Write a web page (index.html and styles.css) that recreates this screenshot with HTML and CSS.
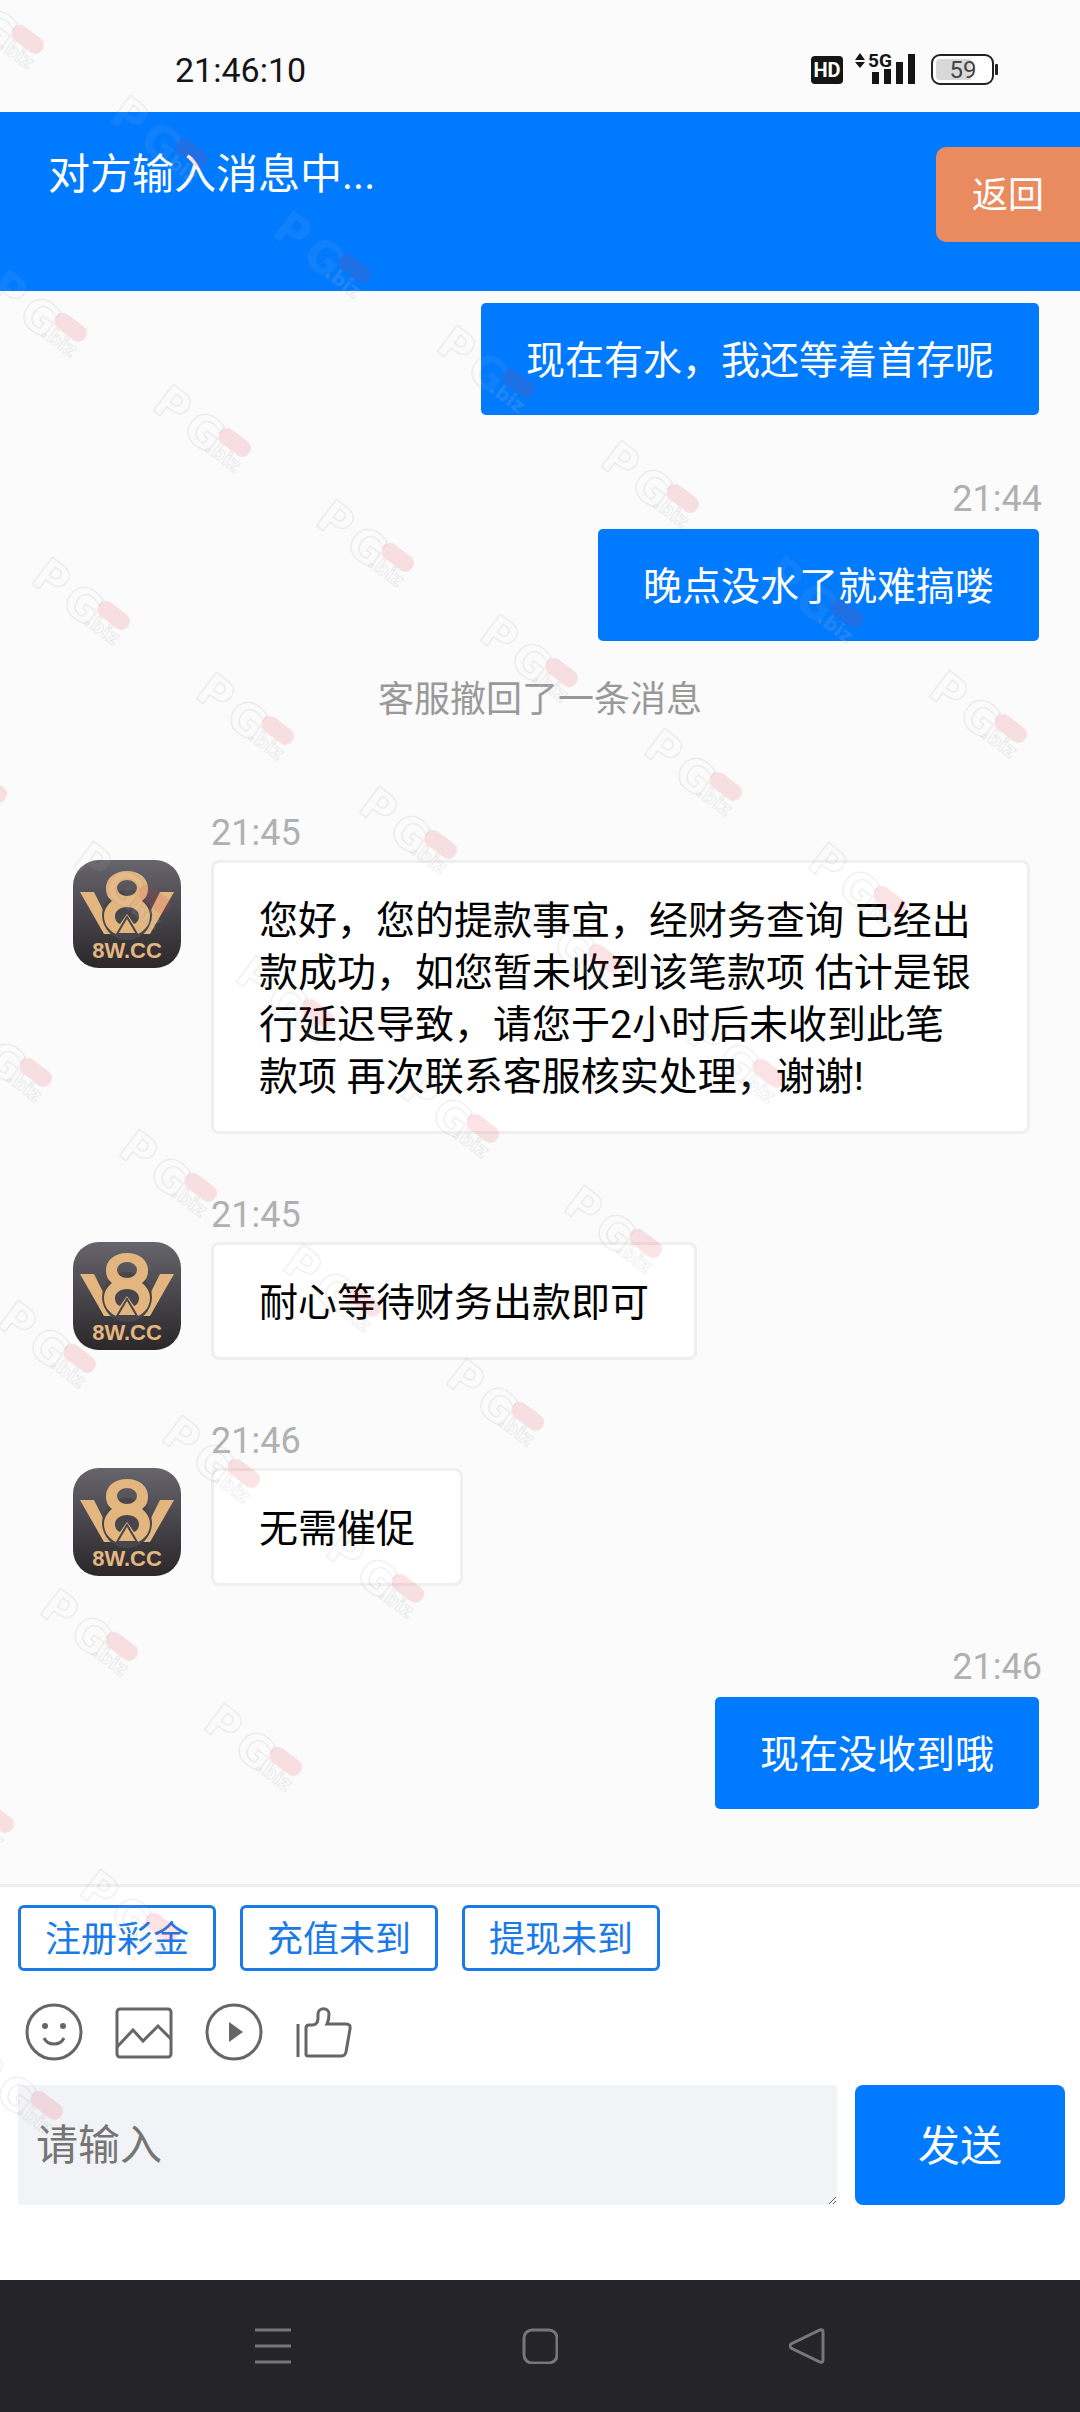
FILE: index.html
```html
<!DOCTYPE html>
<html lang="zh-CN">
<head>
<meta charset="utf-8">
<meta name="viewport" content="width=device-width, initial-scale=1">
<title>在线客服</title>
<link rel="stylesheet" href="styles.css">
</head>
<body>
<svg class="defs" width="0" height="0" aria-hidden="true">
  <defs>
    <linearGradient id="badge" x1="0" y1="0" x2="0" y2="1">
      <stop offset="0" stop-color="#67656c"/>
      <stop offset="0.5" stop-color="#48464b"/>
      <stop offset="1" stop-color="#2b272a"/>
    </linearGradient>
    <symbol id="logo" viewBox="0 0 108 108">
      <rect width="108" height="108" rx="26" fill="url(#badge)"/>
      <path d="M7 32h14l21 42H31zM101 32H87L66 74h11z" fill="#e3b680"/>
      <circle cx="54" cy="55" r="25" fill="#48464b"/>
      <path fill="#e3b680" fill-rule="evenodd" d="M54 11c12 0 21 7 21 17 0 6-2 10-6 13 5 4 8 9 8 15 0 8-5 15-12 18H43c-7-3-12-10-12-18 0-6 3-11 8-15-4-3-6-7-6-13 0-10 9-17 21-17zM54 20a10 8 0 1 0 0 16a10 8 0 1 0 0-16zM54 47c-7 0-12 4-12 9 0 4 2 7 5 8l7-10 7 10c3-1 5-4 5-8 0-5-5-9-12-9z"/>
      <path d="M54 57l10 17H44z" fill="#e3b680" stroke="#48464b" stroke-width="2"/>
      <text x="54" y="98" text-anchor="middle" class="logo-text">8W.CC</text>
    </symbol>
    <g id="wm" transform="rotate(37)">
      <text x="-88" y="24" class="wm-big">P</text>
      <text x="-49" y="26" class="wm-big">G</text>
      <rect x="-18" y="-8" width="36" height="17" rx="8" class="wm-pill"/>
      <text x="-20" y="25" class="wm-small">.biz</text>
    </g>
  </defs>
</svg>

<header class="status">
  <span class="clock">21:46:10</span>
  <svg class="status-icons" width="190" height="60" viewBox="810 40 190 60" aria-label="HD 5G 59%">
    <rect x="811" y="56" width="32" height="28" rx="4" fill="#151515"/>
    <text x="827" y="77" text-anchor="middle" class="hd">HD</text>
    <path d="M855 60l5-7 5 7zM855 62h10l-5 6z" fill="#151515"/>
    <text x="868" y="67" class="fiveg">5G</text>
    <path d="M872 72h7v12h-7zM884 69h7v15h-7zM896 62h7v22h-7zM908 54h7v30h-7z" fill="#151515"/>
    <rect x="932" y="55" width="61" height="29" rx="8" fill="#fff" stroke="#222" stroke-width="2"/>
    <path d="M940 59h31v21h-31q-4 0-4-4v-13q0-4 4-4z" fill="#d8d8d8"/>
    <text x="963" y="78" text-anchor="middle" class="level">59</text>
    <rect x="995" y="64" width="3" height="11" rx="1" fill="#222"/>
  </svg>
</header>

<div class="titlebar">
  <h1>对方输入消息中...</h1>
  <button type="button" class="back">返回</button>
</div>

<main class="chat">
  <article class="msg mine first"><p class="bubble">现在有水，我还等着首存呢</p></article>
  <article class="msg mine">
    <time>21:44</time>
    <p class="bubble">晚点没水了就难搞喽</p>
  </article>
  <p class="notice">客服撤回了一条消息</p>
  <article class="msg theirs">
    <time>21:45</time>
    <svg class="avatar" role="img" aria-label="8W.CC"><use href="#logo"/></svg>
    <p class="bubble">您好，您的提款事宜，经财务查询 已经出款成功，如您暂未收到该笔款项 估计是银行延迟导致，请您于2小时后未收到此笔款项 再次联系客服核实处理，谢谢!</p>
  </article>
  <article class="msg theirs">
    <time>21:45</time>
    <svg class="avatar" role="img" aria-label="8W.CC"><use href="#logo"/></svg>
    <p class="bubble">耐心等待财务出款即可</p>
  </article>
  <article class="msg theirs">
    <time>21:46</time>
    <svg class="avatar" role="img" aria-label="8W.CC"><use href="#logo"/></svg>
    <p class="bubble">无需催促</p>
  </article>
  <article class="msg mine">
    <time>21:46</time>
    <p class="bubble">现在没收到哦</p>
  </article>
</main>

<footer class="composer">
  <div class="quick">
    <button type="button">注册彩金</button>
    <button type="button">充值未到</button>
    <button type="button">提现未到</button>
  </div>
  <div class="tools">
    <button type="button" aria-label="表情">
      <svg viewBox="0 0 60 60"><circle cx="30" cy="30" r="27"/><path d="M20 36c4 8 16 8 20 0"/><g class="solid"><circle cx="21" cy="24" r="3"/><circle cx="39" cy="24" r="3"/></g></svg>
    </button>
    <button type="button" aria-label="图片">
      <svg viewBox="0 0 60 60"><rect x="3" y="7" width="54" height="48" rx="3"/><path d="M3 45l16-17 10 11 15-15 13 13"/></svg>
    </button>
    <button type="button" aria-label="视频">
      <svg viewBox="0 0 60 60"><circle cx="30" cy="30" r="27"/><path class="solid" d="M25 20l14 10-14 10z"/></svg>
    </button>
    <button type="button" aria-label="点赞">
      <svg viewBox="0 0 60 60"><path d="M4 22v33M12 26q0-3 3-3h3c5 0 6-4 6-7v-4c0-7 11-7 11 0 0 4 0 6-2 10h19q5 0 4 5l-4 23q-1 4-4 4H14q-2 0-2-2z"/></svg>
    </button>
  </div>
  <div class="entry">
    <textarea aria-label="请输入" placeholder="请输入"></textarea>
    <button type="button" class="send">发送</button>
  </div>
</footer>

<nav class="sysnav">
  <button type="button" aria-label="菜单"><svg viewBox="0 0 36 36"><path d="M0 2h36M0 18h36M0 34h36"/></svg></button>
  <button type="button" aria-label="主页"><svg viewBox="0 0 36 36"><rect x="2" y="2" width="33" height="33" rx="8"/></svg></button>
  <button type="button" aria-label="后退"><svg viewBox="0 0 36 36"><path d="M31 2q3-1 3 2v28q0 3-3 2L2 20q-2-2 0-4z"/></svg></button>
</nav>

<svg class="watermark" aria-hidden="true">
  <use href="#wm" transform="translate(28 39)"/>
  <use href="#wm" transform="translate(192 153)"/>
  <use href="#wm" transform="translate(355 268)"/>
  <use href="#wm" transform="translate(519 383)"/>
  <use href="#wm" transform="translate(683 498)"/>
  <use href="#wm" transform="translate(847 613)"/>
  <use href="#wm" transform="translate(1011 728)"/>
  <use href="#wm" transform="translate(71 327)"/>
  <use href="#wm" transform="translate(235 442)"/>
  <use href="#wm" transform="translate(398 557)"/>
  <use href="#wm" transform="translate(562 672)"/>
  <use href="#wm" transform="translate(726 786)"/>
  <use href="#wm" transform="translate(890 900)"/>
  <use href="#wm" transform="translate(114 615)"/>
  <use href="#wm" transform="translate(278 730)"/>
  <use href="#wm" transform="translate(441 844)"/>
  <use href="#wm" transform="translate(605 958)"/>
  <use href="#wm" transform="translate(769 1073)"/>
  <use href="#wm" transform="translate(-9 788)"/>
  <use href="#wm" transform="translate(155 899)"/>
  <use href="#wm" transform="translate(318 1013)"/>
  <use href="#wm" transform="translate(483 1128)"/>
  <use href="#wm" transform="translate(646 1243)"/>
  <use href="#wm" transform="translate(36 1072)"/>
  <use href="#wm" transform="translate(201 1187)"/>
  <use href="#wm" transform="translate(365 1302)"/>
  <use href="#wm" transform="translate(528 1416)"/>
  <use href="#wm" transform="translate(80 1358)"/>
  <use href="#wm" transform="translate(244 1473)"/>
  <use href="#wm" transform="translate(408 1588)"/>
  <use href="#wm" transform="translate(122 1646)"/>
  <use href="#wm" transform="translate(286 1761)"/>
  <use href="#wm" transform="translate(-2 1818)"/>
  <use href="#wm" transform="translate(162 1927)"/>
  <use href="#wm" transform="translate(47 2105)"/>
</svg>
</body>
</html>
```
FILE: styles.css
```css
* {
  box-sizing: border-box;
}

body {
  margin: 0;
  min-height: 100vh;
  display: flex;
  flex-direction: column;
  position: relative;
  background: #fbfbfb;
  color: #000;
  font-family: Roboto, "Noto Sans CJK SC", sans-serif;
  font-size: 39px;
}

h1,
p {
  margin: 0;
  font-weight: 400;
}

button,
textarea {
  font-family: inherit;
  border: 0;
  margin: 0;
  padding: 0;
}

.defs {
  position: absolute;
}

.logo-text {
  font: 700 22px "Liberation Sans", sans-serif;
  fill: #e3b680;
}

/* status bar */
.status {
  height: 112px;
  padding: 28px 80px 0 175px;
  display: flex;
  align-items: center;
  justify-content: space-between;
}

.clock {
  font-size: 34px;
  color: #151515;
}

.hd {
  font: 700 20px Roboto, sans-serif;
  fill: #fff;
}

.fiveg {
  font: 700 19px Roboto, sans-serif;
  fill: #151515;
}

.level {
  font: 400 24px Roboto, sans-serif;
  fill: #444;
}

/* title bar */
.titlebar {
  height: 179px;
  padding: 35px 0 0 48px;
  display: flex;
  justify-content: space-between;
  align-items: flex-start;
  background: #007aff;
  color: #fff;
}

.titlebar h1 {
  font-size: 42px;
  line-height: 56px;
}

.back {
  width: 144px;
  height: 95px;
  padding: 0 0 6px;
  border-radius: 10px 0 0 10px;
  background: #ea8a5f;
  color: #fff;
  font-size: 36px;
}

/* conversation */
.chat {
  flex: 1;
  display: flex;
  flex-direction: column;
  padding: 9px 38px 72px;
}

.msg {
  margin-top: 59px;
  display: grid;
  row-gap: 5px;
}

.msg.first {
  margin-top: 0;
}

.msg time {
  font-size: 36px;
  line-height: 44px;
  color: #b0b0b0;
}

.bubble {
  padding: 32px 45px 28px;
  border: 3px solid #efefef;
  border-radius: 8px;
  background: #fff;
  line-height: 52px;
}

.mine {
  justify-items: end;
}

.mine .bubble {
  border-color: transparent;
  background: #007aff padding-box;
  color: #fff;
}

.theirs {
  grid-template-columns: 108px minmax(0, 1fr);
  column-gap: 30px;
  align-items: start;
  justify-items: start;
  padding: 0 12px 0 35px;
}

.theirs time {
  grid-column: 2;
}

.avatar {
  width: 108px;
  height: 108px;
}

.notice {
  margin: 32px 0 28px;
  align-self: center;
  font-size: 36px;
  line-height: 48px;
  color: #999;
}

/* composer */
.composer {
  border-top: 3px solid #eee;
  padding: 18px 15px 75px 18px;
  background: #fff;
}

.quick {
  display: flex;
  gap: 24px;
}

.quick button {
  height: 66px;
  padding: 3px 24px 0;
  border: 3px solid #1a7ae8;
  border-radius: 6px;
  background: #fff;
  color: #1a7ae8;
  font-size: 36px;
  line-height: 52px;
}

.tools {
  display: flex;
  gap: 30px;
  margin: 31px 6px 23px;
}

.tools button {
  width: 60px;
  height: 60px;
  background: none;
}

.tools svg {
  display: block;
  width: 60px;
  height: 60px;
  fill: none;
  stroke: #666;
  stroke-width: 3;
}

.tools .solid {
  fill: #666;
  stroke: none;
}

.entry {
  display: flex;
  gap: 18px;
}

.entry textarea {
  flex: 1;
  min-width: 0;
  height: 120px;
  padding: 33px 18px;
  background: #f2f3f7;
  font-size: 42px;
  line-height: 56px;
  border-radius: 0;
}

.entry textarea::placeholder {
  color: #757575;
}

.send {
  width: 210px;
  height: 120px;
  padding-bottom: 6px;
  border-radius: 8px;
  background: #007aff;
  color: #fff;
  font-size: 42px;
}

/* system navigation */
.sysnav {
  height: 132px;
  display: grid;
  grid-template-columns: repeat(3, 36px);
  column-gap: 231px;
  justify-content: center;
  align-items: center;
  background: #242429;
}

.sysnav button {
  height: 36px;
  background: none;
}

.sysnav svg {
  display: block;
  width: 36px;
  height: 36px;
  fill: none;
  stroke: #77777a;
  stroke-width: 3;
}

/* watermark layer over the whole page */
.watermark {
  position: absolute;
  inset: 0;
  width: 100%;
  height: 100%;
  overflow: hidden;
  pointer-events: none;
}

.wm-big {
  font: 700 44px "DejaVu Sans", sans-serif;
  fill: rgba(255, 255, 255, 0.05);
  stroke: rgba(120, 120, 120, 0.17);
  stroke-width: 1px;
}

.wm-small {
  font: 700 19px "DejaVu Sans", sans-serif;
  fill: rgba(255, 255, 255, 0.1);
  stroke: rgba(120, 120, 120, 0.14);
  stroke-width: 1px;
}

.wm-pill {
  fill: rgba(225, 50, 70, 0.14);
}
```
